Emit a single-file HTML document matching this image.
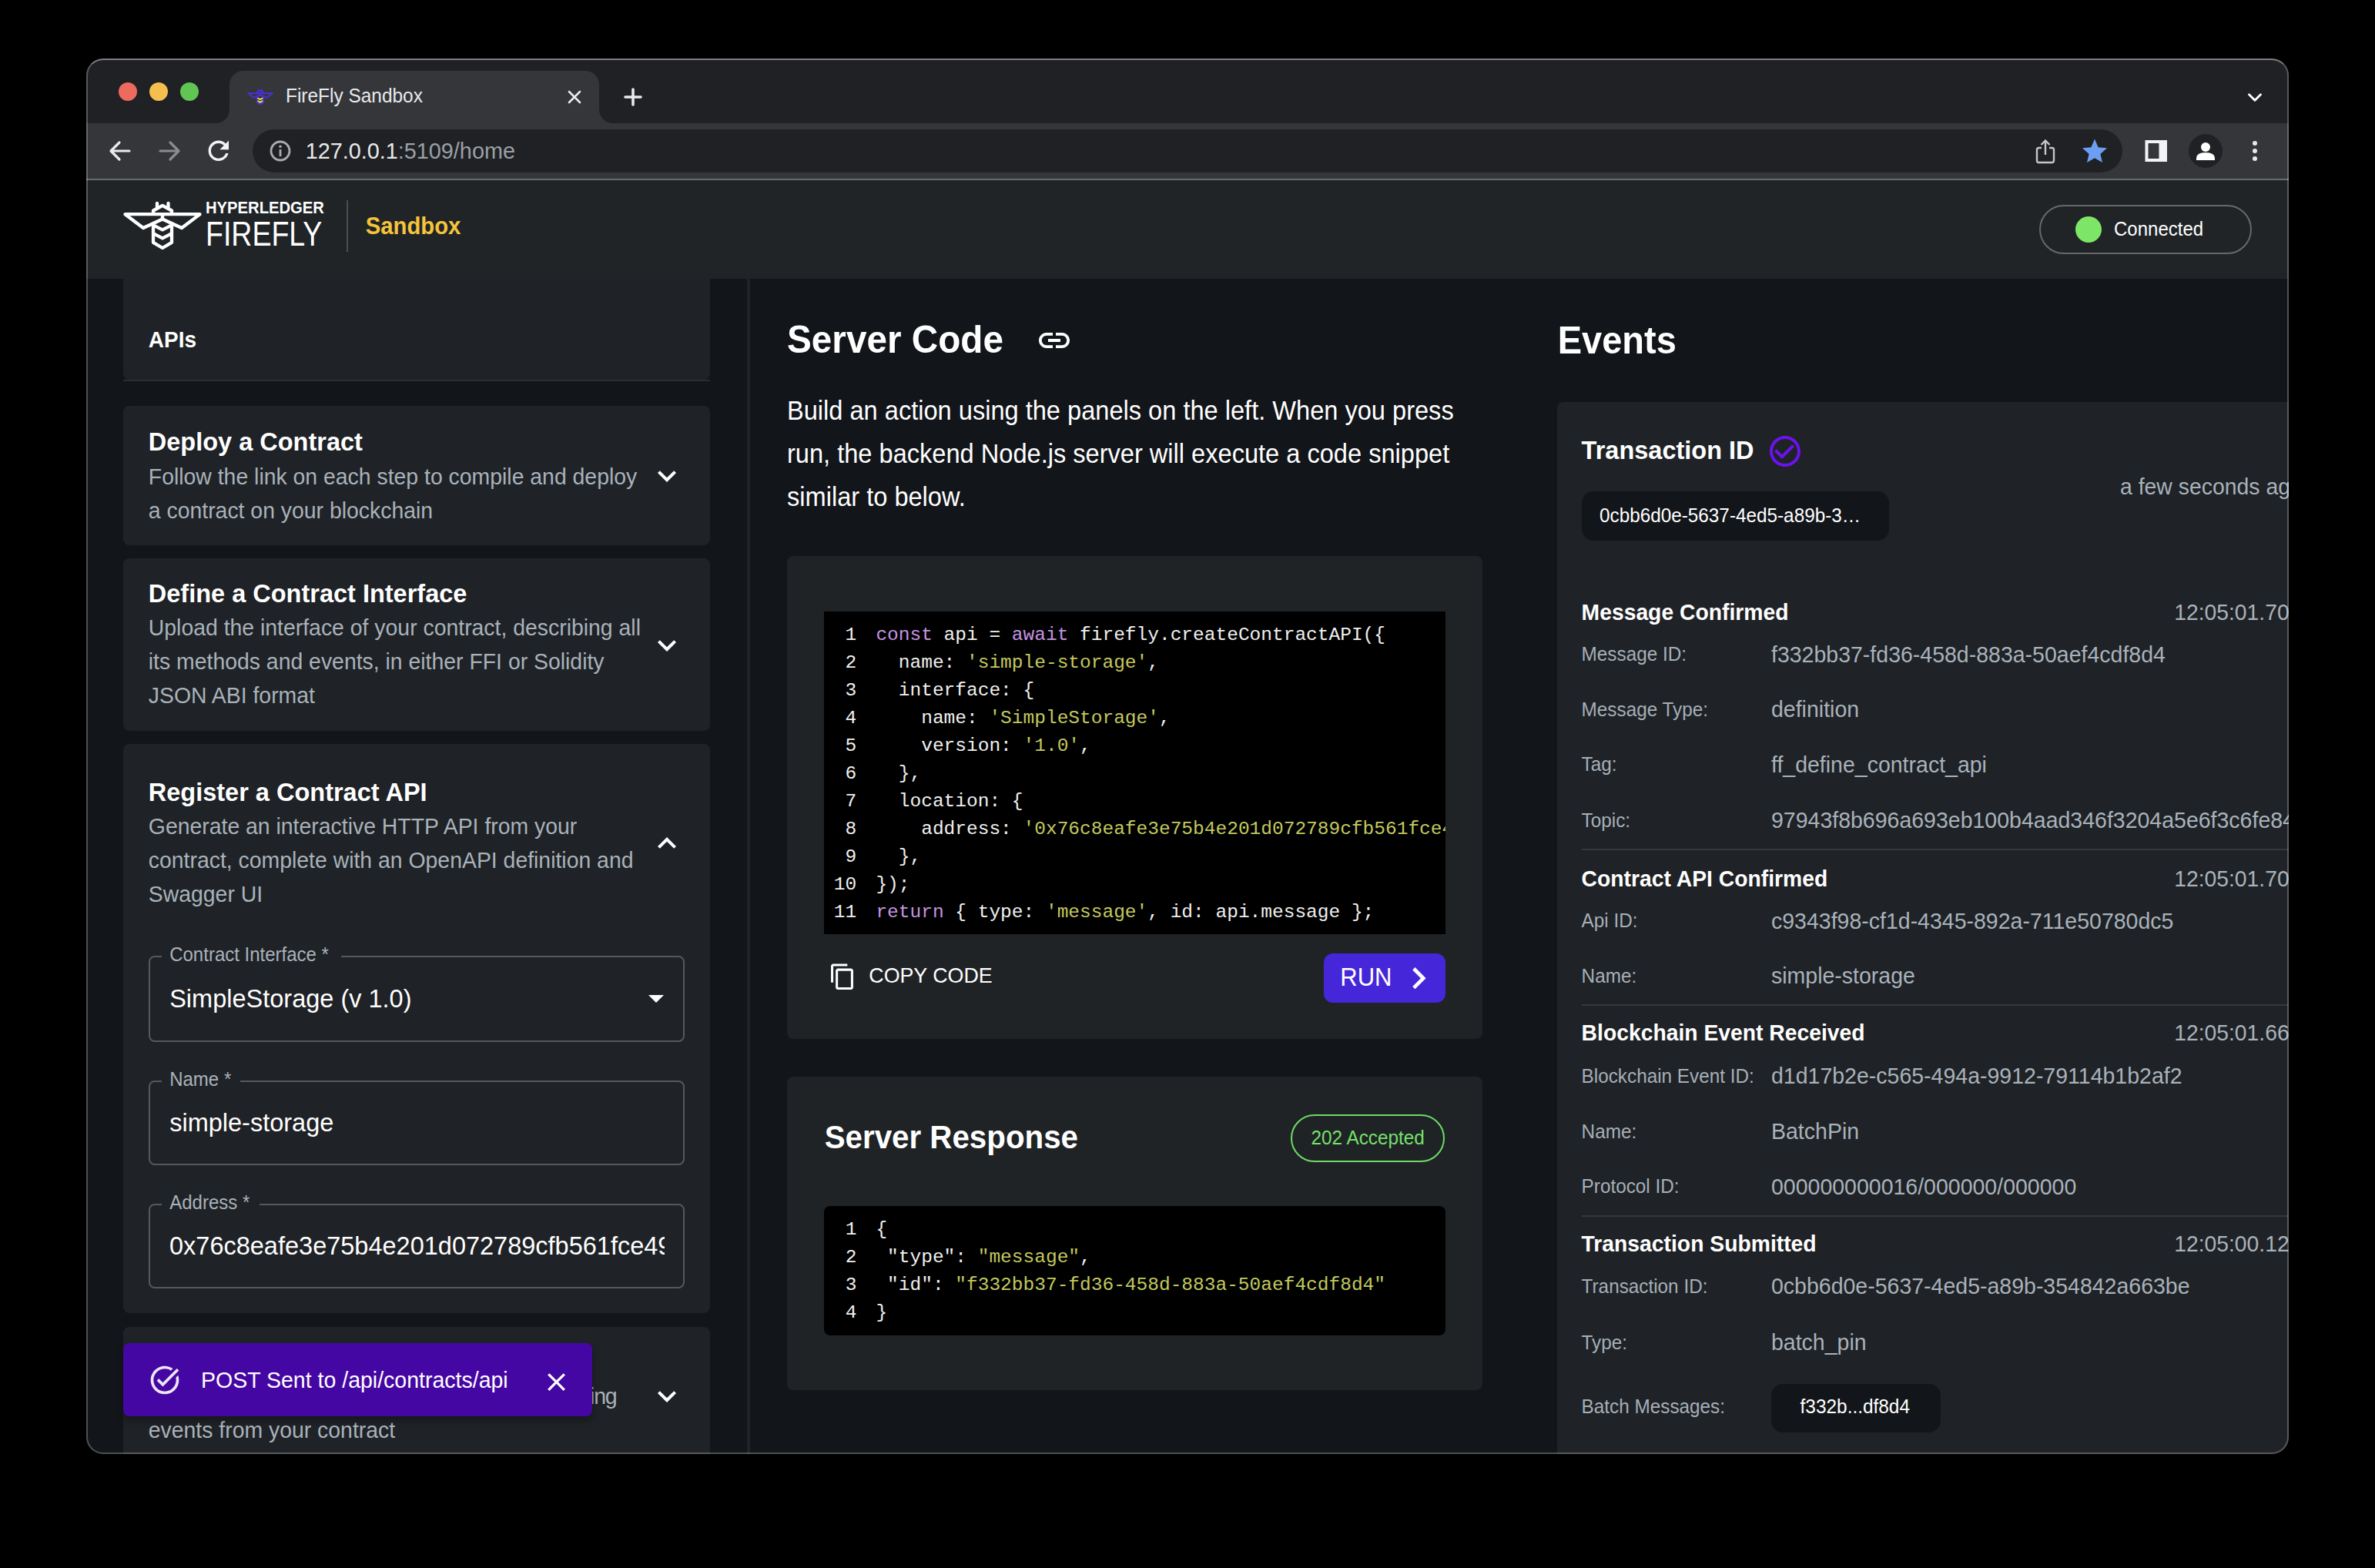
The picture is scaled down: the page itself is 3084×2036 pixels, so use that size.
<!DOCTYPE html>
<html><head><meta charset="utf-8"><title>FireFly Sandbox</title>
<style>
html,body{margin:0;padding:0;background:#000;width:3084px;height:2036px;overflow:hidden;}
.win{position:absolute;left:112px;top:76px;width:2860px;height:1812px;border-radius:22px;overflow:hidden;background:#12151a;}
.frame{position:absolute;left:112px;top:76px;width:2860px;height:1812px;border-radius:22px;box-sizing:border-box;border:2px solid rgba(255,255,255,0.25);border-top-color:rgba(255,255,255,0.42);pointer-events:none;}
.t{position:absolute;white-space:pre;font-family:'Liberation Sans', sans-serif;}
.b{position:absolute;box-sizing:border-box;}
</style></head><body>
<div class="win">
<div class="b" style="left:0.0px;top:0.0px;width:2860.0px;height:84.0px;background:#202124;"></div>
<div class="b" style="left:42.0px;top:31.0px;width:24.0px;height:24.0px;background:#ed6a5e;border-radius:50%;"></div>
<div class="b" style="left:82.0px;top:31.0px;width:24.0px;height:24.0px;background:#f4bf4f;border-radius:50%;"></div>
<div class="b" style="left:122.0px;top:31.0px;width:24.0px;height:24.0px;background:#61c554;border-radius:50%;"></div>
<div class="b" style="left:186.0px;top:16.0px;width:480.0px;height:68.0px;background:#35363a;border-radius:18px 18px 0 0;"></div>
<svg class="b" style="left:168.0px;top:66.0px;width:18.0px;height:18.0px;" viewBox="0 0 18 18"><path d="M0 18 A18 18 0 0 0 18 0 L18 18 Z" fill="#35363a"/></svg>
<svg class="b" style="left:666.0px;top:66.0px;width:18.0px;height:18.0px;" viewBox="0 0 18 18"><path d="M18 18 A18 18 0 0 1 0 0 L0 18 Z" fill="#35363a"/></svg>
<svg class="b" style="left:206.1px;top:36.2px;width:42.4px;height:27.7px;" viewBox="0 0 130 85"><g fill="none" stroke="#4a2fd8" stroke-width="6" stroke-linejoin="round" stroke-linecap="round"><path d="M12.5 28.2 L109.5 28.2 L86 46 L61 34.5 L36 46 Z"/><path d="M61 28.2 V34.5"/><path d="M49 27 V23.5 L61 16.8 L73 23.5 V27"/><path d="M54 14 V19 M68.5 14 V19"/><path d="M49 40 V64.8 L61 72 L73 64.8 V40"/></g><g fill="none" stroke="#f2e33c" stroke-width="5.5" stroke-linecap="round"><path d="M52.5 48 L61 53 L69.5 48"/><path d="M52.5 59 L61 64 L69.5 59"/></g></svg>
<div class="t " style="left:259.0px;top:37.1px;font-size:24.45px;line-height:24.45px;color:#e8eaed;font-weight:400;font-family:'Liberation Sans', sans-serif;transform:scaleY(1.05);transform-origin:0 20.70px;">FireFly Sandbox</div>
<svg class="b" style="left:625.0px;top:41.0px;width:18.0px;height:18.0px;" viewBox="0 0 18 18"><path d="M2 2 L16 16 M16 2 L2 16" stroke="#e8eaed" stroke-width="2.6" stroke-linecap="round"/></svg>
<svg class="b" style="left:698.0px;top:38.0px;width:24.0px;height:24.0px;" viewBox="0 0 24 24"><path d="M12 2 V22 M2 12 H22" stroke="#e8eaed" stroke-width="3.6" stroke-linecap="round"/></svg>
<svg class="b" style="left:2806.0px;top:43.0px;width:20.0px;height:15.0px;" viewBox="0 0 24 17"><path d="M3 4 L12 13 L21 4" fill="none" stroke="#ffffff" stroke-width="3.4" stroke-linecap="round" stroke-linejoin="round"/></svg>
<div class="b" style="left:0.0px;top:84.0px;width:2860.0px;height:72.0px;background:#35363a;"></div>
<div class="b" style="left:0.0px;top:156.0px;width:2860.0px;height:2.0px;background:#6a6b6d;"></div>
<svg class="b" style="left:28.0px;top:104.0px;width:32.0px;height:32.0px;" viewBox="0 0 32 32"><path d="M28 16 H5 M15 5 L4 16 L15 27" fill="none" stroke="#e8eaed" stroke-width="3.2" stroke-linecap="round" stroke-linejoin="round"/></svg>
<svg class="b" style="left:92.0px;top:104.0px;width:32.0px;height:32.0px;" viewBox="0 0 32 32"><path d="M4 16 H27 M17 5 L28 16 L17 27" fill="none" stroke="#8b8c8e" stroke-width="3.2" stroke-linecap="round" stroke-linejoin="round"/></svg>
<svg class="b" style="left:152.2px;top:100.1px;width:39.6px;height:39.6px;" viewBox="0 0 24 24"><path d="M17.65 6.35C16.2 4.9 14.21 4 12 4c-4.42 0-7.99 3.58-7.99 8s3.57 8 7.99 8c3.73 0 6.84-2.55 7.73-6h-2.08c-.82 2.33-3.04 4-5.65 4-3.31 0-6-2.69-6-6s2.69-6 6-6c1.66 0 3.14.69 4.22 1.78L13 11h7V4l-2.35 2.35z" fill="#f1f3f4"/></svg>
<div class="b" style="left:216.0px;top:92.0px;width:2428.0px;height:56.0px;background:#202124;border-radius:28px;"></div>
<svg class="b" style="left:238.0px;top:106.0px;width:28.0px;height:28.0px;" viewBox="0 0 28 28"><circle cx="14" cy="14" r="12" fill="none" stroke="#a8abaf" stroke-width="2.8"/><rect x="12.6" y="12" width="2.8" height="9" fill="#a8abaf"/><circle cx="14" cy="8.2" r="1.8" fill="#a8abaf"/></svg>
<div class="t " style="left:284.7px;top:105.9px;font-size:28.8px;line-height:28.8px;color:#e8eaed;font-weight:400;font-family:'Liberation Sans', sans-serif;transform:scaleY(1.05);transform-origin:0 24.38px;">127.0.0.1<span style="color:#9aa0a6">:5109/home</span></div>
<svg class="b" style="left:2531.0px;top:104.0px;width:26.0px;height:33.0px;" viewBox="0 0 26 33"><path d="M8 12 H4.5 Q2 12 2 14.5 V28.5 Q2 31 4.5 31 H21.5 Q24 31 24 28.5 V14.5 Q24 12 21.5 12 H18" fill="none" stroke="#c4c7c5" stroke-width="2.4"/><path d="M13 21 V3 M7.5 8 L13 2.5 L18.5 8" fill="none" stroke="#c4c7c5" stroke-width="2.4"/></svg>
<svg class="b" style="left:2591.0px;top:103.0px;width:34.0px;height:33.0px;" viewBox="0 0 34 33"><path d="M17 1.5 L21.6 12.2 L33 13.3 L24.4 21 L27 32 L17 26.3 L7 32 L9.6 21 L1 13.3 L12.4 12.2 Z" fill="#6c9ef1"/></svg>
<svg class="b" style="left:2673.0px;top:105.0px;width:30.0px;height:30.0px;" viewBox="0 0 30 30"><rect x="0.5" y="1" width="28.5" height="28" fill="#f1f3f4"/><rect x="4.5" y="5" width="14" height="20" fill="#35363a"/></svg>
<div class="b" style="left:2730.0px;top:98.0px;width:44.0px;height:44.0px;background:#202124;border-radius:50%;"></div>
<svg class="b" style="left:2738.0px;top:106.0px;width:28.0px;height:28.0px;" viewBox="0 0 28 28"><circle cx="14" cy="9" r="6" fill="#fff"/><path d="M2 24 Q2 16 14 16 Q26 16 26 24 V26 H2 Z" fill="#fff"/></svg>
<div class="b" style="left:2813.0px;top:106.8px;width:6.4px;height:6.4px;background:#e8eaed;border-radius:50%;"></div>
<div class="b" style="left:2813.0px;top:116.8px;width:6.4px;height:6.4px;background:#e8eaed;border-radius:50%;"></div>
<div class="b" style="left:2813.0px;top:126.8px;width:6.4px;height:6.4px;background:#e8eaed;border-radius:50%;"></div>
<div class="b" style="left:0.0px;top:158.0px;width:2860.0px;height:128.0px;background:#202427;"></div>
<div class="b" style="left:0.0px;top:286.0px;width:2860.0px;height:1526.0px;background:#12151a;"></div>
<svg class="b" style="left:38.0px;top:174.0px;width:130.0px;height:85.0px;" viewBox="0 0 130 85"><g fill="none" stroke="#fff" stroke-width="4.3" stroke-linejoin="round" stroke-linecap="round"><path d="M12.5 28.2 L109.5 28.2 L86 46 L61 34.5 L36 46 Z"/><path d="M61 28.2 V34.5"/><path d="M49 27 V23.5 L61 16.8 L73 23.5 V27"/><path d="M54 14 V19 M68.5 14 V19"/><path d="M49 40 V64.8 L61 72 L73 64.8 V40"/><path d="M49.5 42.6 L61 48.4 L72.5 42.6"/><path d="M49.5 53.4 L61 59.3 L72.5 53.4"/></g></svg>
<div class="t " style="left:155.0px;top:183.8px;font-size:21.5px;line-height:21.5px;color:#fff;font-weight:700;font-family:'Liberation Sans', sans-serif;transform:scaleX(0.94);transform-origin:0 0;">HYPERLEDGER</div>
<div class="t " style="left:155.0px;top:206.8px;font-size:43.6px;line-height:43.6px;color:#fff;font-weight:400;font-family:'Liberation Sans', sans-serif;transform:scaleX(0.86);transform-origin:0 0;">FIREFLY</div>
<div class="b" style="left:338.0px;top:184.0px;width:2.0px;height:67.0px;background:#4a4d52;"></div>
<div class="t " style="left:362.7px;top:202.6px;font-size:29.3px;line-height:29.3px;color:#f5c43c;font-weight:700;font-family:'Liberation Sans', sans-serif;transform:scaleY(1.05);transform-origin:0 24.81px;">Sandbox</div>
<div class="b" style="left:2536.0px;top:190.0px;width:276.0px;height:64.0px;background:transparent;border:2px solid #686868;border-radius:32px;"></div>
<div class="b" style="left:2583.0px;top:205.0px;width:34.0px;height:34.0px;background:#7ee667;border-radius:50%;"></div>
<div class="t " style="left:2633.0px;top:210.1px;font-size:24px;line-height:24px;color:#fff;font-weight:400;font-family:'Liberation Sans', sans-serif;transform:scaleY(1.05);transform-origin:0 20.32px;">Connected</div>
<div class="b" style="left:48.0px;top:286.0px;width:762.0px;height:131.0px;background:#1f2226;border-radius:0 0 8px 8px;"></div>
<div class="b" style="left:48.0px;top:417.0px;width:762.0px;height:2.0px;background:#2b2e33;"></div>
<div class="t " style="left:80.8px;top:351.9px;font-size:28px;line-height:28px;color:#fff;font-weight:700;font-family:'Liberation Sans', sans-serif;transform:scaleY(1.05);transform-origin:0 23.71px;">APIs</div>
<div class="b" style="left:48.0px;top:451.3px;width:762.0px;height:181.1px;background:#1f2226;border-radius:8px;"></div>
<div class="t " style="left:80.8px;top:482.2px;font-size:32.5px;line-height:32.5px;color:#fff;font-weight:700;font-family:'Liberation Sans', sans-serif;transform:scaleY(1.05);transform-origin:0 27.52px;">Deploy a Contract</div>
<div class="t " style="left:80.8px;top:529.3px;font-size:28.4px;line-height:28.4px;color:#a9b2bb;font-weight:400;font-family:'Liberation Sans', sans-serif;transform:scaleY(1.05);transform-origin:0 24.05px;">Follow the link on each step to compile and deploy</div>
<div class="t " style="left:80.8px;top:572.8px;font-size:28.4px;line-height:28.4px;color:#a9b2bb;font-weight:400;font-family:'Liberation Sans', sans-serif;transform:scaleY(1.05);transform-origin:0 24.05px;">a contract on your blockchain</div>
<svg class="b" style="left:730.0px;top:518.3px;width:48.0px;height:48.0px;" viewBox="0 0 24 24"><path d="M16.59 8.59 12 13.17 7.41 8.59 6 10l6 6 6-6z" fill="#fff"/></svg>
<div class="b" style="left:48.0px;top:649.3px;width:762.0px;height:223.9px;background:#1f2226;border-radius:8px;"></div>
<div class="t " style="left:80.8px;top:679.0px;font-size:32.5px;line-height:32.5px;color:#fff;font-weight:700;font-family:'Liberation Sans', sans-serif;transform:scaleY(1.05);transform-origin:0 27.52px;">Define a Contract Interface</div>
<div class="t " style="left:80.8px;top:725.3px;font-size:28.4px;line-height:28.4px;color:#a9b2bb;font-weight:400;font-family:'Liberation Sans', sans-serif;transform:scaleY(1.05);transform-origin:0 24.05px;">Upload the interface of your contract, describing all</div>
<div class="t " style="left:80.8px;top:769.0px;font-size:28.4px;line-height:28.4px;color:#a9b2bb;font-weight:400;font-family:'Liberation Sans', sans-serif;transform:scaleY(1.05);transform-origin:0 24.05px;">its methods and events, in either FFI or Solidity</div>
<div class="t " style="left:80.8px;top:812.9px;font-size:28.4px;line-height:28.4px;color:#a9b2bb;font-weight:400;font-family:'Liberation Sans', sans-serif;transform:scaleY(1.05);transform-origin:0 24.05px;">JSON ABI format</div>
<svg class="b" style="left:730.0px;top:737.5px;width:48.0px;height:48.0px;" viewBox="0 0 24 24"><path d="M16.59 8.59 12 13.17 7.41 8.59 6 10l6 6 6-6z" fill="#fff"/></svg>
<div class="b" style="left:48.0px;top:890.1px;width:762.0px;height:739.4px;background:#1f2226;border-radius:8px;"></div>
<div class="t " style="left:80.8px;top:936.7px;font-size:32.5px;line-height:32.5px;color:#fff;font-weight:700;font-family:'Liberation Sans', sans-serif;transform:scaleY(1.05);transform-origin:0 27.52px;">Register a Contract API</div>
<div class="t " style="left:80.8px;top:983.0px;font-size:28.4px;line-height:28.4px;color:#a9b2bb;font-weight:400;font-family:'Liberation Sans', sans-serif;transform:scaleY(1.05);transform-origin:0 24.05px;">Generate an interactive HTTP API from your</div>
<div class="t " style="left:80.8px;top:1027.0px;font-size:28.4px;line-height:28.4px;color:#a9b2bb;font-weight:400;font-family:'Liberation Sans', sans-serif;transform:scaleY(1.05);transform-origin:0 24.05px;">contract, complete with an OpenAPI definition and</div>
<div class="t " style="left:80.8px;top:1070.5px;font-size:28.4px;line-height:28.4px;color:#a9b2bb;font-weight:400;font-family:'Liberation Sans', sans-serif;transform:scaleY(1.05);transform-origin:0 24.05px;">Swagger UI</div>
<svg class="b" style="left:730.0px;top:995.3px;width:48.0px;height:48.0px;" viewBox="0 0 24 24"><path d="M7.41 15.41 12 10.83l4.59 4.58L18 14l-6-6-6 6z" fill="#fff"/></svg>
<div class="b" style="left:81.0px;top:1165.3px;width:696.4px;height:112.2px;background:transparent;border:2px solid #55585d;border-radius:8px;"></div>
<div class="b" style="left:97.7px;top:1161.3px;width:233.4px;height:8.0px;background:#1f2226;"></div>
<div class="t " style="left:108.2px;top:1152.0px;font-size:24px;line-height:24px;color:#a9b2bb;font-weight:400;font-family:'Liberation Sans', sans-serif;transform:scaleY(1.05);transform-origin:0 20.32px;">Contract Interface *</div>
<div class="t " style="left:108.2px;top:1204.5px;font-size:32.5px;line-height:32.5px;color:#fff;font-weight:400;font-family:'Liberation Sans', sans-serif;transform:scaleY(1.05);transform-origin:0 27.52px;">SimpleStorage (v 1.0)</div>
<svg class="b" style="left:715.6px;top:1196.2px;width:48.0px;height:48.0px;" viewBox="0 0 24 24"><path d="M7 10l5 5 5-5z" fill="#fff"/></svg>
<div class="b" style="left:81.0px;top:1327.0px;width:696.4px;height:110.4px;background:transparent;border:2px solid #55585d;border-radius:8px;"></div>
<div class="b" style="left:97.7px;top:1323.0px;width:102.1px;height:8.0px;background:#1f2226;"></div>
<div class="t " style="left:108.2px;top:1313.7px;font-size:24px;line-height:24px;color:#a9b2bb;font-weight:400;font-family:'Liberation Sans', sans-serif;transform:scaleY(1.05);transform-origin:0 20.32px;">Name *</div>
<div class="t " style="left:108.2px;top:1365.5px;font-size:32.5px;line-height:32.5px;color:#fff;font-weight:400;font-family:'Liberation Sans', sans-serif;transform:scaleY(1.05);transform-origin:0 27.52px;">simple-storage</div>
<div class="b" style="left:81.0px;top:1487.3px;width:696.4px;height:110.1px;background:transparent;border:2px solid #55585d;border-radius:8px;"></div>
<div class="b" style="left:97.7px;top:1483.3px;width:127.3px;height:8.0px;background:#1f2226;"></div>
<div class="t " style="left:108.2px;top:1474.0px;font-size:24px;line-height:24px;color:#a9b2bb;font-weight:400;font-family:'Liberation Sans', sans-serif;transform:scaleY(1.05);transform-origin:0 20.32px;">Address *</div>
<div class="b" style="left:108px;top:1513.6px;width:642.5px;height:60px;overflow:hidden;">
<div class="t " style="left:0.0px;top:12.5px;font-size:32.5px;line-height:32.5px;color:#fff;font-weight:400;font-family:'Liberation Sans', sans-serif;transform:scaleY(1.05);transform-origin:0 27.52px;">0x76c8eafe3e75b4e201d072789cfb561fce49d7a7</div>
</div>
<div class="b" style="left:48.0px;top:1646.5px;width:762.0px;height:197.5px;background:#1f2226;border-radius:8px;"></div>
<div class="t " style="left:80.8px;top:1676.5px;font-size:32.5px;line-height:32.5px;color:#fff;font-weight:700;font-family:'Liberation Sans', sans-serif;transform:scaleY(1.05);transform-origin:0 27.52px;">Create a Blockchain Event Listener</div>
<div class="t " style="left:80.8px;top:1722.8px;font-size:28.55px;line-height:28.55px;color:#a9b2bb;font-weight:400;font-family:'Liberation Sans', sans-serif;transform:scaleY(1.05);transform-origin:0 24.17px;">Create a listener to start receiving and record<span style="margin-left:2px;letter-spacing:-1.2px">ing</span></div>
<div class="t " style="left:80.8px;top:1766.5px;font-size:28.4px;line-height:28.4px;color:#a9b2bb;font-weight:400;font-family:'Liberation Sans', sans-serif;transform:scaleY(1.05);transform-origin:0 24.05px;">events from your contract</div>
<svg class="b" style="left:730.0px;top:1712.8px;width:48.0px;height:48.0px;" viewBox="0 0 24 24"><path d="M16.59 8.59 12 13.17 7.41 8.59 6 10l6 6 6-6z" fill="#fff"/></svg>
<div class="b" style="left:858.0px;top:286.0px;width:4.0px;height:1526.0px;background:#1f2226;"></div>
<div class="t " style="left:910.0px;top:341.6px;font-size:47.7px;line-height:47.7px;color:#fff;font-weight:700;font-family:'Liberation Sans', sans-serif;transform:scaleY(1.05);transform-origin:0 40.39px;">Server Code</div>
<svg class="b" style="left:1233.0px;top:342.0px;width:48.0px;height:48.0px;" viewBox="0 0 24 24"><path d="M3.9 12c0-1.71 1.39-3.1 3.1-3.1h4V7H7c-2.76 0-5 2.24-5 5s2.24 5 5 5h4v-1.9H7c-1.71 0-3.1-1.39-3.1-3.1zM8 13h8v-2H8v2zm9-6h-4v1.9h4c1.71 0 3.1 1.39 3.1 3.1s-1.39 3.1-3.1 3.1h-4V17h4c2.76 0 5-2.24 5-5s-2.24-5-5-5z" fill="#fff"/></svg>
<div class="t " style="left:910.0px;top:442.1px;font-size:32.6px;line-height:32.6px;color:#fff;font-weight:400;font-family:'Liberation Sans', sans-serif;transform:scaleY(1.05);transform-origin:0 27.60px;">Build an action using the panels on the left. When you press</div>
<div class="t " style="left:910.0px;top:497.9px;font-size:32.6px;line-height:32.6px;color:#fff;font-weight:400;font-family:'Liberation Sans', sans-serif;transform:scaleY(1.05);transform-origin:0 27.60px;">run, the backend Node.js server will execute a code snippet</div>
<div class="t " style="left:910.0px;top:554.4px;font-size:32.6px;line-height:32.6px;color:#fff;font-weight:400;font-family:'Liberation Sans', sans-serif;transform:scaleY(1.05);transform-origin:0 27.60px;">similar to below.</div>
<div class="b" style="left:910.0px;top:646.2px;width:903.0px;height:626.4px;background:#1f2326;border-radius:8px;"></div>
<div class="b" style="left:958.0px;top:718.0px;width:807.0px;height:419.4px;background:#000;"></div>
<div class="b" style="left:958px;top:718px;width:807px;height:419.4px;overflow:hidden;">
<div class="t " style="left:12.8px;top:19.4px;font-size:24.5px;line-height:24.5px;color:#f0f0f0;font-weight:400;font-family:'Liberation Mono', monospace;"><span style="color:#f0f0f0"> 1</span></div>
<div class="t " style="left:67.4px;top:19.4px;font-size:24.5px;line-height:24.5px;color:#f0f0f0;font-weight:400;font-family:'Liberation Mono', monospace;"><span style="color:#c594e0">const</span> api = <span style="color:#c594e0">await</span> firefly.createContractAPI({</div>
<div class="t " style="left:12.8px;top:55.4px;font-size:24.5px;line-height:24.5px;color:#f0f0f0;font-weight:400;font-family:'Liberation Mono', monospace;"><span style="color:#f0f0f0"> 2</span></div>
<div class="t " style="left:67.4px;top:55.4px;font-size:24.5px;line-height:24.5px;color:#f0f0f0;font-weight:400;font-family:'Liberation Mono', monospace;">  name: <span style="color:#c3c95f">'simple-storage'</span>,</div>
<div class="t " style="left:12.8px;top:91.4px;font-size:24.5px;line-height:24.5px;color:#f0f0f0;font-weight:400;font-family:'Liberation Mono', monospace;"><span style="color:#f0f0f0"> 3</span></div>
<div class="t " style="left:67.4px;top:91.4px;font-size:24.5px;line-height:24.5px;color:#f0f0f0;font-weight:400;font-family:'Liberation Mono', monospace;">  interface: {</div>
<div class="t " style="left:12.8px;top:127.4px;font-size:24.5px;line-height:24.5px;color:#f0f0f0;font-weight:400;font-family:'Liberation Mono', monospace;"><span style="color:#f0f0f0"> 4</span></div>
<div class="t " style="left:67.4px;top:127.4px;font-size:24.5px;line-height:24.5px;color:#f0f0f0;font-weight:400;font-family:'Liberation Mono', monospace;">    name: <span style="color:#c3c95f">'SimpleStorage'</span>,</div>
<div class="t " style="left:12.8px;top:163.4px;font-size:24.5px;line-height:24.5px;color:#f0f0f0;font-weight:400;font-family:'Liberation Mono', monospace;"><span style="color:#f0f0f0"> 5</span></div>
<div class="t " style="left:67.4px;top:163.4px;font-size:24.5px;line-height:24.5px;color:#f0f0f0;font-weight:400;font-family:'Liberation Mono', monospace;">    version: <span style="color:#c3c95f">'1.0'</span>,</div>
<div class="t " style="left:12.8px;top:199.4px;font-size:24.5px;line-height:24.5px;color:#f0f0f0;font-weight:400;font-family:'Liberation Mono', monospace;"><span style="color:#f0f0f0"> 6</span></div>
<div class="t " style="left:67.4px;top:199.4px;font-size:24.5px;line-height:24.5px;color:#f0f0f0;font-weight:400;font-family:'Liberation Mono', monospace;">  },</div>
<div class="t " style="left:12.8px;top:235.4px;font-size:24.5px;line-height:24.5px;color:#f0f0f0;font-weight:400;font-family:'Liberation Mono', monospace;"><span style="color:#f0f0f0"> 7</span></div>
<div class="t " style="left:67.4px;top:235.4px;font-size:24.5px;line-height:24.5px;color:#f0f0f0;font-weight:400;font-family:'Liberation Mono', monospace;">  location: {</div>
<div class="t " style="left:12.8px;top:271.4px;font-size:24.5px;line-height:24.5px;color:#f0f0f0;font-weight:400;font-family:'Liberation Mono', monospace;"><span style="color:#f0f0f0"> 8</span></div>
<div class="t " style="left:67.4px;top:271.4px;font-size:24.5px;line-height:24.5px;color:#f0f0f0;font-weight:400;font-family:'Liberation Mono', monospace;">    address: <span style="color:#c3c95f">'0x76c8eafe3e75b4e201d072789cfb561fce49d7a7'</span>,</div>
<div class="t " style="left:12.8px;top:307.4px;font-size:24.5px;line-height:24.5px;color:#f0f0f0;font-weight:400;font-family:'Liberation Mono', monospace;"><span style="color:#f0f0f0"> 9</span></div>
<div class="t " style="left:67.4px;top:307.4px;font-size:24.5px;line-height:24.5px;color:#f0f0f0;font-weight:400;font-family:'Liberation Mono', monospace;">  },</div>
<div class="t " style="left:12.8px;top:343.4px;font-size:24.5px;line-height:24.5px;color:#f0f0f0;font-weight:400;font-family:'Liberation Mono', monospace;"><span style="color:#f0f0f0">10</span></div>
<div class="t " style="left:67.4px;top:343.4px;font-size:24.5px;line-height:24.5px;color:#f0f0f0;font-weight:400;font-family:'Liberation Mono', monospace;">});</div>
<div class="t " style="left:12.8px;top:379.4px;font-size:24.5px;line-height:24.5px;color:#f0f0f0;font-weight:400;font-family:'Liberation Mono', monospace;"><span style="color:#f0f0f0">11</span></div>
<div class="t " style="left:67.4px;top:379.4px;font-size:24.5px;line-height:24.5px;color:#f0f0f0;font-weight:400;font-family:'Liberation Mono', monospace;"><span style="color:#c594e0">return</span> { type: <span style="color:#c3c95f">'message'</span>, id: api.message };</div>
</div>
<svg class="b" style="left:964.0px;top:1174.4px;width:36.5px;height:36.5px;" viewBox="0 0 24 24"><path d="M16 1H4c-1.1 0-2 .9-2 2v14h2V3h12V1zm3 4H8c-1.1 0-2 .9-2 2v14c0 1.1.9 2 2 2h11c1.1 0 2-.9 2-2V7c0-1.1-.9-2-2-2zm0 16H8V7h11v14z" fill="#fff"/></svg>
<div class="t " style="left:1016.3px;top:1177.9px;font-size:26.8px;line-height:26.8px;color:#fff;font-weight:400;font-family:'Liberation Sans', sans-serif;transform:scaleY(1.05);transform-origin:0 22.69px;">COPY CODE</div>
<div class="b" style="left:1607.0px;top:1162.0px;width:158.0px;height:63.6px;background:#4527d9;border-radius:12px;"></div>
<div class="t " style="left:1628.3px;top:1178.2px;font-size:31px;line-height:31px;color:#fff;font-weight:400;font-family:'Liberation Sans', sans-serif;transform:scaleY(1.05);transform-origin:0 26.25px;">RUN</div>
<svg class="b" style="left:1701.7px;top:1165.9px;width:56.4px;height:56.4px;" viewBox="0 0 24 24"><path d="M10 6 8.59 7.41 13.17 12l-4.58 4.59L10 18l6-6z" fill="#fff"/></svg>
<div class="b" style="left:910.0px;top:1322.2px;width:903.0px;height:407.0px;background:#1f2326;border-radius:8px;"></div>
<div class="t " style="left:958.7px;top:1382.3px;font-size:40.3px;line-height:40.3px;color:#fff;font-weight:700;font-family:'Liberation Sans', sans-serif;transform:scaleY(1.05);transform-origin:0 34.12px;">Server Response</div>
<div class="b" style="left:1564.0px;top:1370.7px;width:200.3px;height:62.6px;background:transparent;border:2px solid #6ddc66;border-radius:32px;"></div>
<div class="t " style="left:1590.5px;top:1390.4px;font-size:24.3px;line-height:24.3px;color:#76e06a;font-weight:400;font-family:'Liberation Sans', sans-serif;transform:scaleY(1.05);transform-origin:0 20.57px;">202 Accepted</div>
<div class="b" style="left:958.0px;top:1490.0px;width:807.0px;height:167.7px;background:#000;border-radius:8px;"></div>
<div class="t " style="left:985.8px;top:1508.7px;font-size:24.5px;line-height:24.5px;color:#f0f0f0;font-weight:400;font-family:'Liberation Mono', monospace;">1</div>
<div class="t " style="left:1025.4px;top:1508.7px;font-size:24.5px;line-height:24.5px;color:#f0f0f0;font-weight:400;font-family:'Liberation Mono', monospace;">{</div>
<div class="t " style="left:985.8px;top:1544.7px;font-size:24.5px;line-height:24.5px;color:#f0f0f0;font-weight:400;font-family:'Liberation Mono', monospace;">2</div>
<div class="t " style="left:1025.4px;top:1544.7px;font-size:24.5px;line-height:24.5px;color:#f0f0f0;font-weight:400;font-family:'Liberation Mono', monospace;"> "type": <span style="color:#c3c95f">"message"</span>,</div>
<div class="t " style="left:985.8px;top:1580.7px;font-size:24.5px;line-height:24.5px;color:#f0f0f0;font-weight:400;font-family:'Liberation Mono', monospace;">3</div>
<div class="t " style="left:1025.4px;top:1580.7px;font-size:24.5px;line-height:24.5px;color:#f0f0f0;font-weight:400;font-family:'Liberation Mono', monospace;"> "id": <span style="color:#c3c95f">"f332bb37-fd36-458d-883a-50aef4cdf8d4"</span></div>
<div class="t " style="left:985.8px;top:1616.7px;font-size:24.5px;line-height:24.5px;color:#f0f0f0;font-weight:400;font-family:'Liberation Mono', monospace;">4</div>
<div class="t " style="left:1025.4px;top:1616.7px;font-size:24.5px;line-height:24.5px;color:#f0f0f0;font-weight:400;font-family:'Liberation Mono', monospace;">}</div>
<div class="t " style="left:1910.7px;top:342.6px;font-size:47px;line-height:47px;color:#fff;font-weight:700;font-family:'Liberation Sans', sans-serif;transform:scaleY(1.05);transform-origin:0 39.79px;">Events</div>
<div class="b" style="left:1909.5px;top:446.4px;width:978.5px;height:1397.6px;background:#1f2226;border-radius:8px;"></div>
<div class="t " style="left:1941.6px;top:493.1px;font-size:32.5px;line-height:32.5px;color:#fff;font-weight:700;font-family:'Liberation Sans', sans-serif;transform:scaleY(1.05);transform-origin:0 27.52px;">Transaction ID</div>
<svg class="b" style="left:2182.0px;top:486.0px;width:48.0px;height:48.0px;" viewBox="0 0 24 24"><path d="M16.59 7.58 10 14.17l-3.59-3.58L5 12l5 5 8-8zM12 2C6.48 2 2 6.48 2 12s4.48 10 10 10 10-4.48 10-10S17.52 2 12 2zm0 18c-4.42 0-8-3.58-8-8s3.58-8 8-8 8 3.58 8 8-3.58 8-8 8z" fill="#6b12ee"/></svg>
<div class="b" style="left:1941.6px;top:562.0px;width:399.4px;height:64.0px;background:#12151a;border-radius:15px;"></div>
<div class="t " style="left:1965.0px;top:581.7px;font-size:24.3px;line-height:24.3px;color:#fff;font-weight:400;font-family:'Liberation Sans', sans-serif;transform:scaleY(1.05);transform-origin:0 20.57px;">0cbb6d0e-5637-4ed5-a89b-3…</div>
<div class="t " style="left:2641.0px;top:542.0px;font-size:28.4px;line-height:28.4px;color:#a9b2bb;font-weight:400;font-family:'Liberation Sans', sans-serif;transform:scaleY(1.05);transform-origin:0 24.05px;">a few seconds ago</div>
<div class="t " style="left:1941.6px;top:704.8px;font-size:28.3px;line-height:28.3px;color:#fff;font-weight:700;font-family:'Liberation Sans', sans-serif;transform:scaleY(1.05);transform-origin:0 23.96px;">Message Confirmed</div>
<div class="t " style="left:2711.2px;top:704.8px;font-size:28.3px;line-height:28.3px;color:#a9b2bb;font-weight:400;font-family:'Liberation Sans', sans-serif;transform:scaleY(1.05);transform-origin:0 23.96px;">12:05:01.708</div>
<div class="t " style="left:1941.6px;top:762.4px;font-size:24.3px;line-height:24.3px;color:#a6afb8;font-weight:400;font-family:'Liberation Sans', sans-serif;transform:scaleY(1.05);transform-origin:0 20.57px;">Message ID:</div>
<div class="t " style="left:2188.0px;top:759.7px;font-size:28.5px;line-height:28.5px;color:#a9b2bb;font-weight:400;font-family:'Liberation Sans', sans-serif;transform:scaleY(1.05);transform-origin:0 24.13px;">f332bb37-fd36-458d-883a-50aef4cdf8d4</div>
<div class="t " style="left:1941.6px;top:834.0px;font-size:24.3px;line-height:24.3px;color:#a6afb8;font-weight:400;font-family:'Liberation Sans', sans-serif;transform:scaleY(1.05);transform-origin:0 20.57px;">Message Type:</div>
<div class="t " style="left:2188.0px;top:831.3px;font-size:28.5px;line-height:28.5px;color:#a9b2bb;font-weight:400;font-family:'Liberation Sans', sans-serif;transform:scaleY(1.05);transform-origin:0 24.13px;">definition</div>
<div class="t " style="left:1941.6px;top:905.4px;font-size:24.3px;line-height:24.3px;color:#a6afb8;font-weight:400;font-family:'Liberation Sans', sans-serif;transform:scaleY(1.05);transform-origin:0 20.57px;">Tag:</div>
<div class="t " style="left:2188.0px;top:902.7px;font-size:28.5px;line-height:28.5px;color:#a9b2bb;font-weight:400;font-family:'Liberation Sans', sans-serif;transform:scaleY(1.05);transform-origin:0 24.13px;">ff_define_contract_api</div>
<div class="t " style="left:1941.6px;top:977.6px;font-size:24.3px;line-height:24.3px;color:#a6afb8;font-weight:400;font-family:'Liberation Sans', sans-serif;transform:scaleY(1.05);transform-origin:0 20.57px;">Topic:</div>
<div class="t " style="left:2188.0px;top:974.9px;font-size:28.5px;line-height:28.5px;color:#a9b2bb;font-weight:400;font-family:'Liberation Sans', sans-serif;transform:scaleY(1.05);transform-origin:0 24.13px;">97943f8b696a693eb100b4aad346f3204a5e6f3c6fe84a2d</div>
<div class="b" style="left:1941.6px;top:1026.2px;width:918.4px;height:2.0px;background:#35383d;"></div>
<div class="t " style="left:1941.6px;top:1050.7px;font-size:28.3px;line-height:28.3px;color:#fff;font-weight:700;font-family:'Liberation Sans', sans-serif;transform:scaleY(1.05);transform-origin:0 23.96px;">Contract API Confirmed</div>
<div class="t " style="left:2711.2px;top:1050.7px;font-size:28.3px;line-height:28.3px;color:#a9b2bb;font-weight:400;font-family:'Liberation Sans', sans-serif;transform:scaleY(1.05);transform-origin:0 23.96px;">12:05:01.708</div>
<div class="t " style="left:1941.6px;top:1108.3px;font-size:24.3px;line-height:24.3px;color:#a6afb8;font-weight:400;font-family:'Liberation Sans', sans-serif;transform:scaleY(1.05);transform-origin:0 20.57px;">Api ID:</div>
<div class="t " style="left:2188.0px;top:1105.6px;font-size:28.5px;line-height:28.5px;color:#a9b2bb;font-weight:400;font-family:'Liberation Sans', sans-serif;transform:scaleY(1.05);transform-origin:0 24.13px;">c9343f98-cf1d-4345-892a-711e50780dc5</div>
<div class="t " style="left:1941.6px;top:1179.5px;font-size:24.3px;line-height:24.3px;color:#a6afb8;font-weight:400;font-family:'Liberation Sans', sans-serif;transform:scaleY(1.05);transform-origin:0 20.57px;">Name:</div>
<div class="t " style="left:2188.0px;top:1176.8px;font-size:28.5px;line-height:28.5px;color:#a9b2bb;font-weight:400;font-family:'Liberation Sans', sans-serif;transform:scaleY(1.05);transform-origin:0 24.13px;">simple-storage</div>
<div class="b" style="left:1941.6px;top:1228.0px;width:918.4px;height:2.0px;background:#35383d;"></div>
<div class="t " style="left:1941.6px;top:1251.3px;font-size:28.3px;line-height:28.3px;color:#fff;font-weight:700;font-family:'Liberation Sans', sans-serif;transform:scaleY(1.05);transform-origin:0 23.96px;">Blockchain Event Received</div>
<div class="t " style="left:2711.2px;top:1251.3px;font-size:28.3px;line-height:28.3px;color:#a9b2bb;font-weight:400;font-family:'Liberation Sans', sans-serif;transform:scaleY(1.05);transform-origin:0 23.96px;">12:05:01.663</div>
<div class="t " style="left:1941.6px;top:1310.1px;font-size:24.3px;line-height:24.3px;color:#a6afb8;font-weight:400;font-family:'Liberation Sans', sans-serif;transform:scaleY(1.05);transform-origin:0 20.57px;">Blockchain Event ID:</div>
<div class="t " style="left:2188.0px;top:1307.4px;font-size:28.5px;line-height:28.5px;color:#a9b2bb;font-weight:400;font-family:'Liberation Sans', sans-serif;transform:scaleY(1.05);transform-origin:0 24.13px;">d1d17b2e-c565-494a-9912-79114b1b2af2</div>
<div class="t " style="left:1941.6px;top:1381.8px;font-size:24.3px;line-height:24.3px;color:#a6afb8;font-weight:400;font-family:'Liberation Sans', sans-serif;transform:scaleY(1.05);transform-origin:0 20.57px;">Name:</div>
<div class="t " style="left:2188.0px;top:1379.1px;font-size:28.5px;line-height:28.5px;color:#a9b2bb;font-weight:400;font-family:'Liberation Sans', sans-serif;transform:scaleY(1.05);transform-origin:0 24.13px;">BatchPin</div>
<div class="t " style="left:1941.6px;top:1453.4px;font-size:24.3px;line-height:24.3px;color:#a6afb8;font-weight:400;font-family:'Liberation Sans', sans-serif;transform:scaleY(1.05);transform-origin:0 20.57px;">Protocol ID:</div>
<div class="t " style="left:2188.0px;top:1450.7px;font-size:28.5px;line-height:28.5px;color:#a9b2bb;font-weight:400;font-family:'Liberation Sans', sans-serif;transform:scaleY(1.05);transform-origin:0 24.13px;">000000000016/000000/000000</div>
<div class="b" style="left:1941.6px;top:1501.5px;width:918.4px;height:2.0px;background:#35383d;"></div>
<div class="t " style="left:1941.6px;top:1525.2px;font-size:28.3px;line-height:28.3px;color:#fff;font-weight:700;font-family:'Liberation Sans', sans-serif;transform:scaleY(1.05);transform-origin:0 23.96px;">Transaction Submitted</div>
<div class="t " style="left:2711.2px;top:1525.2px;font-size:28.3px;line-height:28.3px;color:#a9b2bb;font-weight:400;font-family:'Liberation Sans', sans-serif;transform:scaleY(1.05);transform-origin:0 23.96px;">12:05:00.125</div>
<div class="t " style="left:1941.6px;top:1582.9px;font-size:24.3px;line-height:24.3px;color:#a6afb8;font-weight:400;font-family:'Liberation Sans', sans-serif;transform:scaleY(1.05);transform-origin:0 20.57px;">Transaction ID:</div>
<div class="t " style="left:2188.0px;top:1580.2px;font-size:28.5px;line-height:28.5px;color:#a9b2bb;font-weight:400;font-family:'Liberation Sans', sans-serif;transform:scaleY(1.05);transform-origin:0 24.13px;">0cbb6d0e-5637-4ed5-a89b-354842a663be</div>
<div class="t " style="left:1941.6px;top:1656.1px;font-size:24.3px;line-height:24.3px;color:#a6afb8;font-weight:400;font-family:'Liberation Sans', sans-serif;transform:scaleY(1.05);transform-origin:0 20.57px;">Type:</div>
<div class="t " style="left:2188.0px;top:1653.4px;font-size:28.5px;line-height:28.5px;color:#a9b2bb;font-weight:400;font-family:'Liberation Sans', sans-serif;transform:scaleY(1.05);transform-origin:0 24.13px;">batch_pin</div>
<div class="t " style="left:1941.6px;top:1739.2px;font-size:24.3px;line-height:24.3px;color:#a6afb8;font-weight:400;font-family:'Liberation Sans', sans-serif;transform:scaleY(1.05);transform-origin:0 20.57px;">Batch Messages:</div>
<div class="b" style="left:2188.0px;top:1721.4px;width:219.7px;height:62.9px;background:#12151a;border-radius:15px;"></div>
<div class="t " style="left:2225.6px;top:1739.1px;font-size:24.4px;line-height:24.4px;color:#fff;font-weight:400;font-family:'Liberation Sans', sans-serif;transform:scaleY(1.05);transform-origin:0 20.66px;">f332b...df8d4</div>
<div class="b" style="left:47.9px;top:1668.1px;width:608.9px;height:95.1px;background:#4507a3;border-radius:8px;box-shadow:0 6px 10px rgba(0,0,0,0.3);"></div>
<svg class="b" style="left:79.8px;top:1694.0px;width:44.0px;height:44.0px;" viewBox="0 0 24 24"><path d="M22 5.18 10.59 16.6l-4.24-4.24 1.41-1.41 2.83 2.83 10-10L22 5.18zm-2.21 5.04c.13.57.21 1.17.21 1.78 0 4.42-3.58 8-8 8s-8-3.58-8-8 3.58-8 8-8c1.58 0 3.04.46 4.28 1.25l1.44-1.44C16.1 2.67 14.13 2 12 2 6.48 2 2 6.48 2 12s4.48 10 10 10 10-4.48 10-10c0-1.19-.22-2.33-.6-3.39l-1.61 1.61z" fill="#ece6f5"/></svg>
<div class="t " style="left:149.0px;top:1701.9px;font-size:28.5px;line-height:28.5px;color:#fff;font-weight:400;font-family:'Liberation Sans', sans-serif;transform:scaleY(1.05);transform-origin:0 24.13px;">POST Sent to /api/contracts/api</div>
<svg class="b" style="left:590.7px;top:1698.9px;width:39.1px;height:39.1px;" viewBox="0 0 24 24"><path d="M19 6.41 17.59 5 12 10.59 6.41 5 5 6.41 10.59 12 5 17.59 6.41 19 12 13.41 17.59 19 19 17.59 13.41 12z" fill="#fff"/></svg>
</div>
<div class="frame"></div>
</body></html>
